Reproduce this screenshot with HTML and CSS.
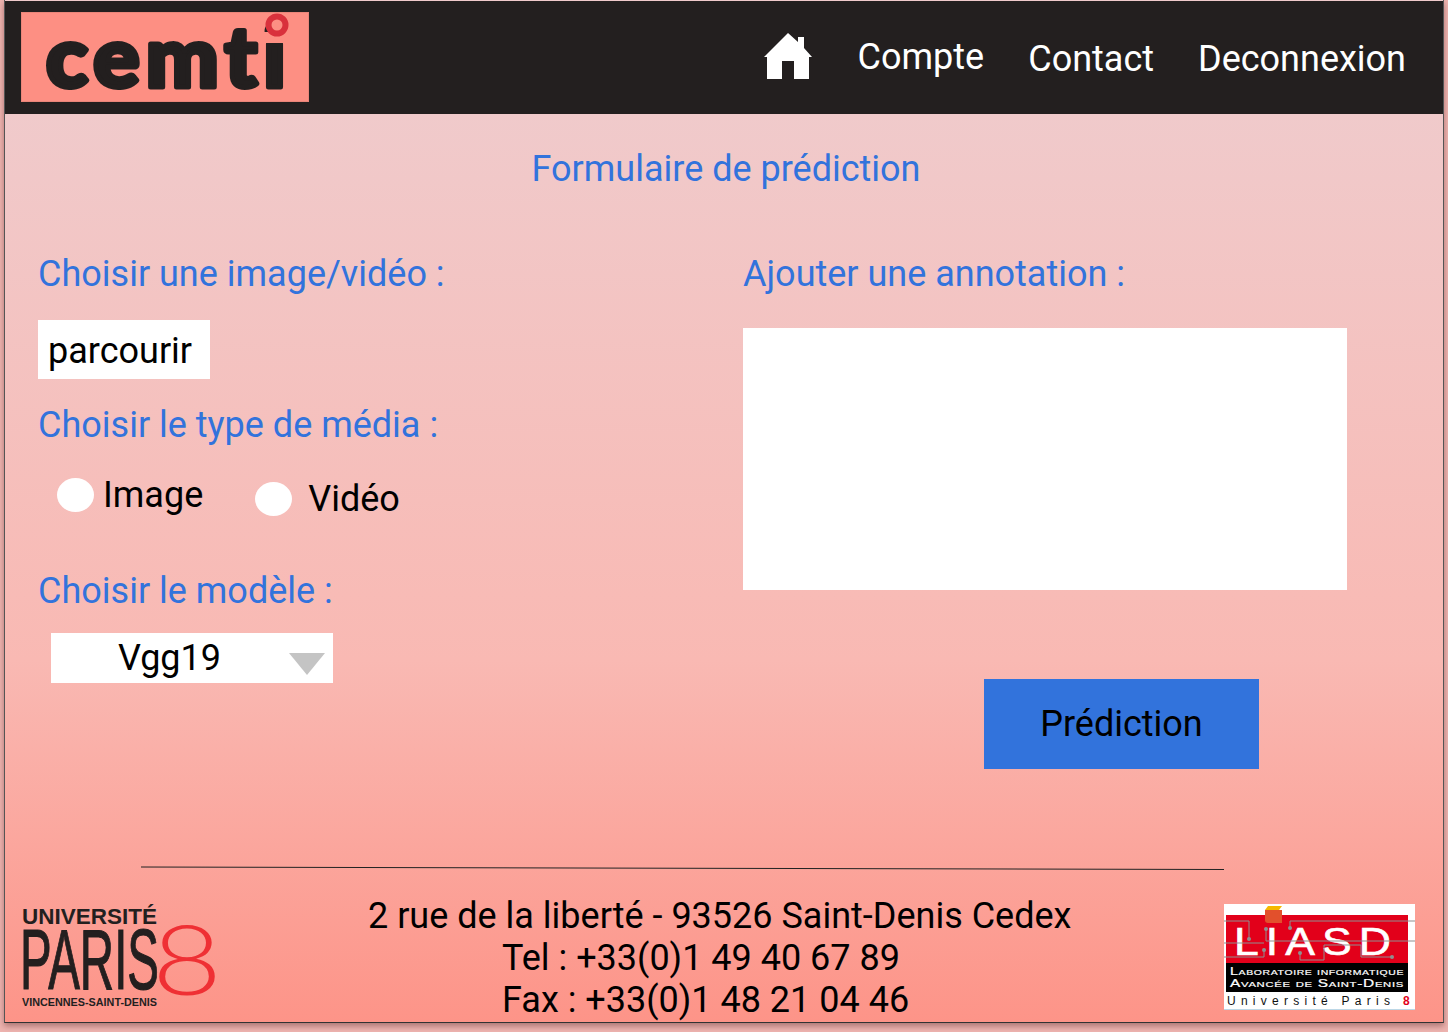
FILE: index.html
```html
<!DOCTYPE html>
<html lang="fr">
<head>
  <meta charset="UTF-8" />
  <title>Formulaire de prédiction</title>
  <link rel="stylesheet" href="styles.css">
</head>
<body>
  <div class="frame">
    <header class="topbar">
      <div class="logo-cemti">
        <svg width="288" height="90" viewBox="0 0 288 90">
          <text class="cemti-word" x="25" y="75" textLength="246" lengthAdjust="spacingAndGlyphs">cemti</text>
          <rect x="240" y="20" width="30" height="11" fill="#fd8f83" />
          <circle cx="256" cy="13" r="8.5" fill="#fd8f83" stroke="#d9313c" stroke-width="6" />
        </svg>
      </div>
      <nav class="menu">
        <a class="menu-home" href="#" title="Accueil">
          <svg width="48" height="46" viewBox="0 0 48 46">
            <path fill="#fff" d="M24 0 L34 9 V4 H40 V15 L48 24 H45 V46 H30 V28 H18 V46 H3 V24 H0 Z" />
          </svg>
        </a>
        <a class="menu-up" href="#">Compte</a>
        <a href="#">Contact</a>
        <a href="#">Deconnexion</a>
      </nav>
    </header>

    <main class="content">
      <h1 class="title">Formulaire de prédiction</h1>
      <form class="form-grid">
        <div class="col-left">
          <label class="label">Choisir une image/vidéo :</label>
          <button type="button" class="browse">parcourir</button>
          <label class="label label-type">Choisir le type de média :</label>
          <div class="radios">
            <label class="radio"><input type="radio" name="media"><span>Image</span></label>
            <label class="radio radio-video"><input type="radio" name="media"><span>Vidéo</span></label>
          </div>
          <label class="label label-model">Choisir le modèle :</label>
          <div class="select-wrap">
            <select class="select">
              <option>Vgg19</option>
            </select>
          </div>
        </div>
        <div class="col-right">
          <label class="label">Ajouter une annotation :</label>
          <textarea class="annotation"></textarea>
          <button type="button" class="predict">Prédiction</button>
        </div>
      </form>
    </main>

    <svg class="rule" width="1083" height="4" viewBox="0 0 1083 4">
      <line x1="0" y1="1" x2="1083" y2="3.5" stroke="#222" stroke-width="1" />
    </svg>

    <footer class="footer">
      <svg class="logo-paris" width="193" height="106" viewBox="0 0 193 106">
        <text class="paris-top" x="0" y="20" textLength="135" lengthAdjust="spacingAndGlyphs">UNIVERSITÉ</text>
        <text class="paris-word" x="-2" y="85" textLength="139" lengthAdjust="spacingAndGlyphs">PARIS</text>
        <text class="paris-eight" x="130" y="91" textLength="70" lengthAdjust="spacingAndGlyphs">8</text>
        <text class="paris-sub" x="0" y="102" textLength="135" lengthAdjust="spacingAndGlyphs">VINCENNES-SAINT-DENIS</text>
      </svg>
      <address class="address">
        <span>2 rue de la liberté - 93526 Saint-Denis Cedex</span>
        <span class="address-line">Tel : +33(0)1 49 40 67 89</span>
        <span class="address-line">Fax : +33(0)1 48 21 04 46</span>
      </address>
      <svg class="logo-liasd" width="191" height="106" viewBox="0 0 191 106">
        <rect width="191" height="106" fill="#fff" />
        <rect y="105" width="191" height="1" fill="#bcd7e6" />
        <rect x="2" y="11" width="182" height="48" fill="#e2001a" />
        <rect x="2" y="59" width="182" height="29" fill="#000" />
        <text class="liasd-word" x="10" y="51" textLength="164" lengthAdjust="spacingAndGlyphs">LIASD</text>
        <path fill="none" stroke="#8f8f8f" stroke-width="1" d="M0 17 H25 V35 M0 39 H40 M0 53 H40 V46 M42 25 V37 H191 M66 24 V17 H191 M76 49 V56 H100 V41 H137 V53 H168" />
        <path fill="#e2502c" d="M41 6 H58 V19 H44 Q41 19 41 16 Z" />
        <path fill="#f5b800" d="M44 2 H58 L55 6 H41 Z" />
        <circle cx="42" cy="25" r="2" fill="#8f8f8f" />
        <circle cx="66" cy="24" r="2" fill="#8f8f8f" />
        <circle cx="25" cy="35" r="2" fill="#8f8f8f" />
        <circle cx="40" cy="46" r="2" fill="#8f8f8f" />
        <circle cx="76" cy="49" r="2" fill="#8f8f8f" />
        <circle cx="168" cy="53" r="2" fill="#8f8f8f" />
        <text class="liasd-line" x="6" y="71" textLength="174" lengthAdjust="spacingAndGlyphs">Laboratoire informatique</text>
        <text class="liasd-line" x="6" y="83" textLength="174" lengthAdjust="spacingAndGlyphs">Avancée de Saint-Denis</text>
        <text class="liasd-univ" x="3" y="101" textLength="163" lengthAdjust="spacing">Université Paris</text>
        <text class="liasd-eight" x="179" y="101">8</text>
      </svg>
    </footer>
  </div>
</body>
</html>
```

FILE: styles.css
```css
html, body {
  margin: 0;
  height: 100%;
}
body {
  background: #eeb4b0;
  font-family: Roboto, "Liberation Sans", sans-serif;
  font-size: 36px;
  overflow: hidden;
}
.frame {
  width: 1438px;
  height: 1022px;
  margin-left: 4px;
  border-left: 1px solid #555;
  border-right: 1px solid #555;
  border-bottom: 1px solid #333;
  /* le degrade commence sous la barre */
  background: linear-gradient(180deg, #f0cacb 114px, #f9b9b3 660px, #fd9488 1022px);
  box-shadow: 0 3px 6px rgba(90, 40, 40, 0.45);
  display: flex;
  flex-direction: column;
}

/* barre du haut */
.topbar {
  height: 113px;
  margin-top: 1px;
  background: #231f1f;
  display: flex;
  justify-content: space-between;
  align-items: flex-start;
  padding: 0 37px 0 16px;
  flex-shrink: 0;
}
.logo-cemti {
  width: 288px;
  height: 90px;
  margin-top: 11px;
  background: #fd8f83;
  box-shadow: inset 0 0 0 1px #ea8579;
}
.cemti-word {
  font-family: Lato, sans-serif;
  font-weight: 900;
  font-size: 84px;
  letter-spacing: 6px;
  font-variant-ligatures: none;
  fill: #231f1f;
  stroke: #231f1f;
  stroke-width: 5;
  stroke-linejoin: round;
}
.menu {
  display: flex;
  align-items: flex-start;
  gap: 44px;
  padding-top: 32px;
}
.menu a {
  color: #fff;
  text-decoration: none;
  line-height: 42px;
  margin-top: 5px;
}
.menu .menu-home {
  height: 46px;
  margin: 0 2px 0 0;
}
.menu .menu-up {
  margin-top: 3px;
}

/* formulaire */
.content {
  flex: 1;
}
.title {
  margin: 34px 0 0;
  padding-left: 4px;
  font-size: 36px;
  font-weight: 400;
  line-height: 42px;
  text-align: center;
  color: #3273dc;
}
.form-grid {
  display: grid;
  grid-template-columns: 705px 1fr;
  padding: 63px 0 0 33px;
}
.label {
  display: block;
  font-size: 36px;
  line-height: 42px;
  color: #3273dc;
}
.col-left,
.col-right {
  display: flex;
  flex-direction: column;
  align-items: flex-start;
}
.browse {
  width: 172px;
  height: 59px;
  margin-top: 25px;
  padding: 2px 0 0 10px;
  border: 0;
  background: #fff;
  font: inherit;
  color: #000;
  text-align: left;
}
.label-type {
  margin-top: 25px;
}
.radios {
  display: flex;
  align-items: flex-start;
  margin: 32px 0 0 19px;
  gap: 52px;
}
.radio {
  display: flex;
  align-items: center;
  line-height: 34px;
}
.radio span {
  margin-left: 9px;
}
.radio input {
  appearance: none;
  width: 37px;
  height: 34px;
  margin: 0;
  border-radius: 50%;
  background: #fff;
}
.radio-video {
  margin-top: 3px;
}
.radio-video span {
  margin-left: 16px;
  padding-top: 1px;
}
.label-model {
  margin-top: 54px;
}
.select-wrap {
  position: relative;
  margin: 21px 0 0 13px;
}
.select-wrap::after {
  content: "";
  position: absolute;
  top: 20px;
  right: 8px;
  border-left: 18.5px solid transparent;
  border-right: 18.5px solid transparent;
  border-top: 22px solid #c4c4c4;
}
.select {
  appearance: none;
  display: block;
  width: 282px;
  height: 50px;
  padding: 0 0 0 67px;
  border: 0;
  border-radius: 0;
  background: #fff;
  font: inherit;
  color: #000;
}
.annotation {
  display: block;
  width: 604px;
  height: 262px;
  margin-top: 33px;
  padding: 0;
  border: 0;
  background: #fff;
  resize: none;
}
.predict {
  width: 275px;
  height: 90px;
  margin: 89px 0 0 241px;
  border: 0;
  background: #3273dc;
  font: inherit;
  color: #000;
}

/* bas de page */
.rule {
  display: block;
  margin-left: 136px;
  flex-shrink: 0;
}
.footer {
  box-sizing: border-box;
  height: 152px;
  display: flex;
  align-items: flex-start;
  padding: 34px 28px 0 17px;
  flex-shrink: 0;
}
.logo-paris,
.logo-liasd {
  flex-shrink: 0;
  overflow: visible;
}
.logo-liasd {
  margin-left: auto;
}
.paris-top {
  font-family: "Liberation Sans", sans-serif;
  font-weight: 700;
  font-size: 22px;
  fill: #231f1f;
}
.paris-word {
  font-family: "Liberation Sans", sans-serif;
  font-size: 85px;
  fill: #231f1f;
  stroke: #231f1f;
  stroke-width: 1.2;
}
.paris-eight {
  font-family: Lato, sans-serif;
  font-weight: 300;
  font-size: 96px;
  fill: #ef3034;
}
.paris-sub {
  font-family: "Liberation Sans", sans-serif;
  font-weight: 700;
  font-size: 11px;
  fill: #231f1f;
}
.address {
  display: flex;
  flex-direction: column;
  align-items: flex-start;
  margin: -9px 0 0 153px;
  font-style: normal;
  line-height: 42px;
  color: #000;
}
.address-line {
  margin-left: 134px;
}
.liasd-word {
  font-family: "Liberation Sans", sans-serif;
  font-size: 38px;
  letter-spacing: 6px;
  fill: #fff;
  stroke: #fff;
  stroke-width: 0.6;
}
.liasd-line {
  font-family: "Liberation Sans", sans-serif;
  font-size: 11px;
  font-variant: small-caps;
  letter-spacing: 0.5px;
  fill: #fff;
  stroke: #fff;
  stroke-width: 0.2;
}
.liasd-univ {
  font-family: "Liberation Sans", sans-serif;
  font-size: 12px;
  fill: #111;
}
.liasd-eight {
  font-family: "Liberation Sans", sans-serif;
  font-size: 12px;
  font-weight: 700;
  fill: #e2001a;
}
```
